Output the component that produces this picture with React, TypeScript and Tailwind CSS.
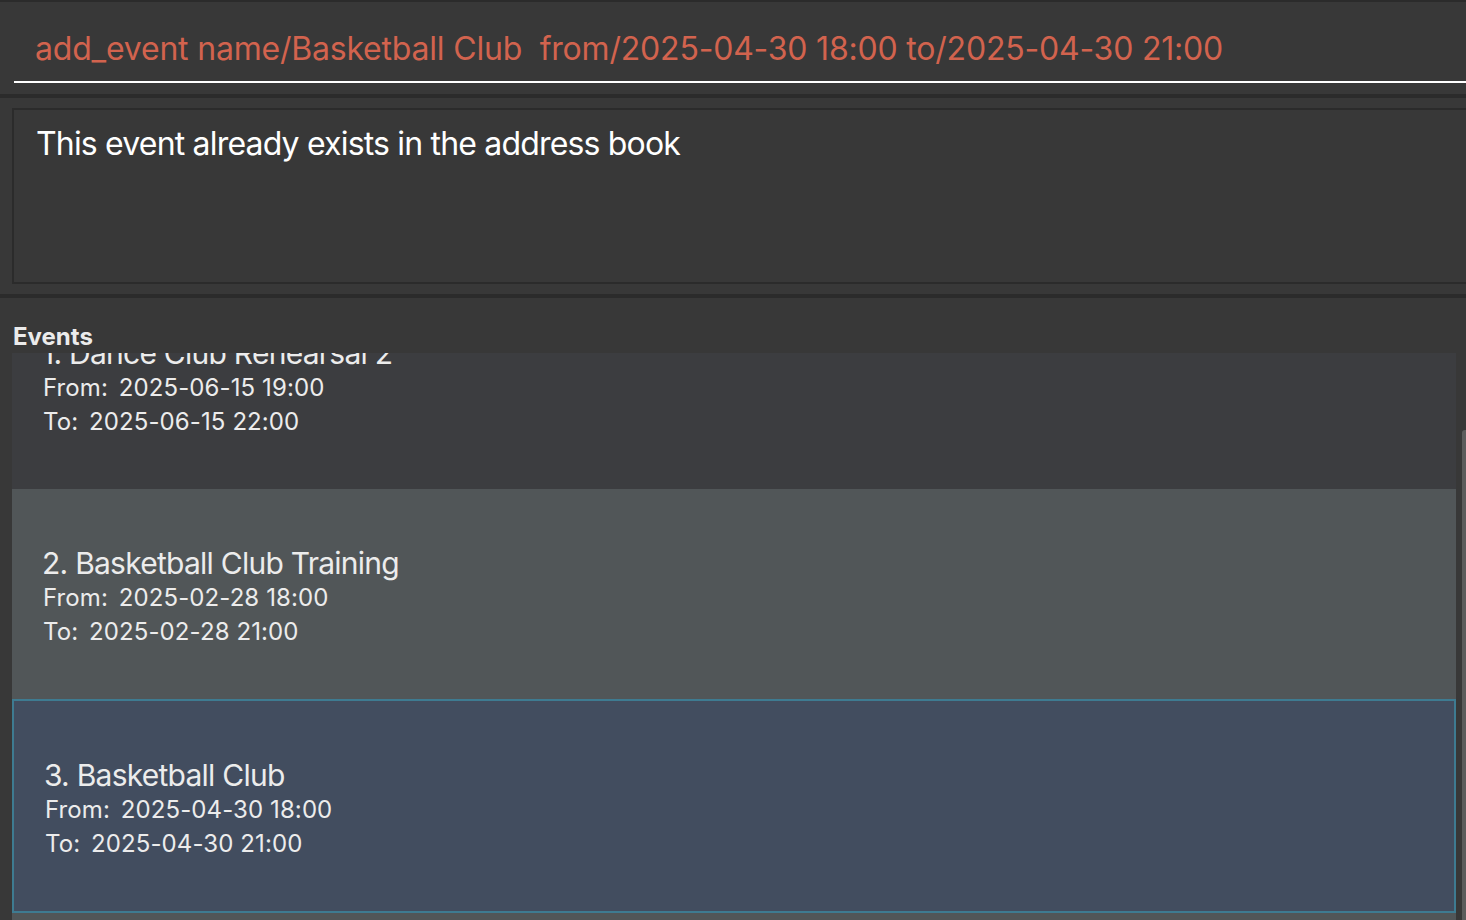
import React from "react";

type Ev = { title: string; from: string; to: string };

const events: Ev[] = [
  { title: "1. Dance Club Rehearsal 2", from: "2025-06-15 19:00", to: "2025-06-15 22:00" },
  { title: "2. Basketball Club Training", from: "2025-02-28 18:00", to: "2025-02-28 21:00" },
  { title: "3. Basketball Club", from: "2025-04-30 18:00", to: "2025-04-30 21:00" },
  { title: "4. Volleyball Club", from: "2025-05-01 18:00", to: "2025-05-01 21:00" },
];

function Card({ ev, idx, selected }: { ev: Ev; idx: number; selected: boolean }) {
  const bg = selected
    ? "bg-[#424d5f] border-2 border-[#3e7b91]"
    : idx % 2 === 0
    ? "bg-[#3c3d40]"
    : "bg-[#515658]";
  return (
    <div className={`${bg} h-[204px] pt-[6px] box-content shrink-0 flex flex-col justify-center pl-[31px] text-[#ececec]`}>
      <div className="text-[30px] leading-[36px] tracking-[-0.75px] -ml-[1px]">{ev.title}</div>
      <div className="text-[24px] leading-[34px] tracking-[0.1px]">
        From: <span className="ml-[4px]">{ev.from}</span>
      </div>
      <div className="text-[24px] leading-[34px] tracking-[0.1px]">
        To: <span className="ml-[4px]">{ev.to}</span>
      </div>
    </div>
  );
}

export default function App() {
  return (
    <div
      className="w-[1466px] h-[920px] overflow-hidden bg-[#383838] flex flex-col"
      style={{ fontFamily: "Inter, 'Noto Sans', sans-serif" }}
    >
      <div className="h-[2px] bg-[#2b2b2b] shrink-0" />
      {/* command box */}
      <div className="h-[92px] shrink-0 pl-[14px] pt-[26px]">
        <div className="border-b-2 border-white h-[55px] pl-[21px] pt-[1px]">
          <div className="text-[32px] leading-[40px] text-[#d2634e] tracking-[-0.2px] whitespace-pre">
            add_event name/Basketball Club  from/2025-04-30 18:00 to/2025-04-30 21:00
          </div>
        </div>
      </div>
      <div className="h-[4px] bg-[#2b2b2b] shrink-0" />
      {/* result display */}
      <div className="h-[196px] shrink-0 pt-[10px] pl-[12px]">
        <div className="h-[176px] border-2 border-r-0 border-[#2b2b2b] pl-[22px] pt-[14px]">
          <div className="text-[32px] leading-[40px] text-white tracking-[-0.82px]">
            This event already exists in the address book
          </div>
        </div>
      </div>
      <div className="h-[4px] bg-[#2b2b2b] shrink-0" />
      {/* events panel */}
      <div className="flex-1 flex flex-col min-h-0">
        <div className="h-[55px] shrink-0 pl-[13px] pt-[24px]">
          <div className="text-[24px] leading-[30px] font-bold text-[#ebebeb] tracking-[0px]">Events</div>
        </div>
        <div className="flex-1 min-h-0 flex pl-[12px]">
          <div className="flex-1 min-h-0 overflow-hidden bg-[#515658]">
            <div className="flex flex-col mt-[-74px]">
              {events.map((ev, i) => (
                <Card key={i} ev={ev} idx={i} selected={i === 2} />
              ))}
            </div>
          </div>
          <div className="w-[10px] shrink-0 flex justify-end">
            <div className="w-[4px] mt-[77px] bg-[#5c5c5c] rounded-tl-[3px]" />
          </div>
        </div>
      </div>
    </div>
  );
}
